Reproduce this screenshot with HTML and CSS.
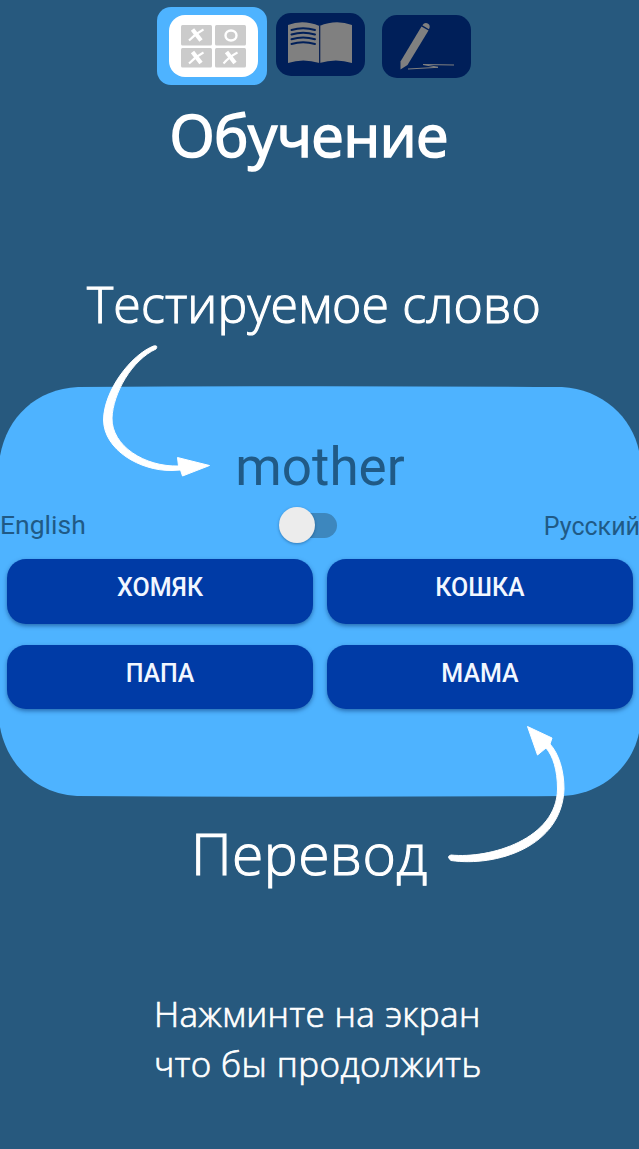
FILE: index.html
```html
<!DOCTYPE html>
<html lang="ru">
<head>
<meta charset="utf-8">
<title>Обучение</title>
<link rel="stylesheet" href="styles.css">
</head>
<body>
<main class="screen">
  <nav class="modes">
    <div class="mode-active">
      <svg class="icon" width="110" height="78" viewBox="157 7 110 78">
        <rect x="169" y="15" width="89" height="62" rx="16" fill="#fff"/>
        <g fill="#cbcbcb">
          <rect x="181" y="25" width="31" height="20.5" rx="1.5"/>
          <rect x="215" y="25" width="31" height="20.5" rx="1.5"/>
          <rect x="181" y="48" width="31" height="19.5" rx="1.5"/>
          <rect x="215" y="48" width="31" height="19.5" rx="1.5"/>
        </g>
        <g fill="none" stroke="#fff">
          <path stroke-width="4.200" d="M192.500 29.500L201 40.500M192.500 52L201 63M226.500 52L235 63"/>
          <path stroke-width="2" d="M203.500 29.500Q195 34 189 40.500M203.500 52.500Q195 57 189 63.500M237.500 52.500Q229 57 223.500 63.500"/>
          <ellipse cx="231" cy="35.500" rx="5.500" ry="5" stroke-width="2.400"/>
        </g>
      </svg>
    </div>
    <svg class="icon icon-book" width="89" height="63" viewBox="276 13 89 63">
      <rect x="276" y="13" width="89" height="63" rx="15" fill="#001f59"/>
      <path fill="#808080" d="M288 25Q303 19 319.500 26Q336 19 352 25V63Q336 58 319.500 63Q303 58 288 63Z"/>
      <path stroke="#00194d" stroke-width="1.200" d="M319.700 26V63"/>
      <path fill="none" stroke="#001f59" stroke-width="2" stroke-linecap="round" d="M291.500 30Q303 26.500 315 30M291.500 34.500Q303 31 315 34.500M291.500 39.200Q303 35.700 315 39.200M291.500 44Q303 40.500 315 44"/>
    </svg>
    <svg class="icon icon-pen" width="89" height="63" viewBox="382 15 89 63">
      <rect x="382" y="15" width="89" height="63" rx="15" fill="#001f59"/>
      <g fill="#808080">
        <path d="M421.500 26.500L428.500 30.500L407.500 65L400.500 69.500L400.500 61.500Z"/>
        <path d="M422.300 25.200Q425 21.500 428.500 24Q430.700 26 428.900 29.200Z"/>
      </g>
      <path fill="none" stroke="#808080" stroke-width="1" d="M454 65L423 64.500L438 67.300L408 69"/>
    </svg>
  </nav>

  <h1 class="title"><span>Обучение</span></h1>
  <p class="label-word"><span>Тестируемое слово</span></p>

  <section class="card">
    <svg class="card-bg" width="639" height="412" viewBox="0 386 639 412">
      <path fill="#4eb3ff" d="M0 456C7 417 36 389 78 387Q320 385.500 562 387C602 389 632 417 639 451V733C632 767 602 794 563 796Q320 797.500 77 796C38 794 7 766 0 727Z"/>
    </svg>
    <div class="card-body">
      <div class="word">mother</div>
      <div class="languages">
        <span class="lang-from">English</span>
        <span class="switch"><span class="knob"></span></span>
        <span class="lang-to">Русский</span>
      </div>
      <div class="answers">
        <button class="answer">ХОМЯК</button>
        <button class="answer">КОШКА</button>
        <button class="answer">ПАПА</button>
        <button class="answer">МАМА</button>
      </div>
    </div>
  </section>

  <p class="label-translation"><span>Перевод</span></p>
  <p class="hint"><span class="hint-top">Нажминте на экран</span><span class="hint-bottom">что бы продолжить</span></p>

  <svg class="arrows" width="639" height="1149" viewBox="0 0 639 1149">
    <path d="M153.500 346C131 355 104 390 103.500 420C104 450 140 471 172 470.500L180.500 470L182.500 476L209.500 465.500L177.500 457.500L178.500 466C145 467 111.500 446 112 418C113 393 132 360 156 349Q158.500 345 153.500 346Z"/>
    <path d="M451 855C490 859 557 839 557.500 789C557.500 770 553 756 546 748L537.500 755L527.500 726.500L552 738L550 744C559 754 564 771 564 789C562 847 496 867 451 860.500Q446 856.500 451 855Z"/>
  </svg>
</main>
</body>
</html>
```
FILE: styles.css
```css
* { box-sizing: border-box; }
body { margin: 0; background: #27597e; }
.screen {
  position: relative;
  display: flex;
  flex-direction: column;
  width: 639px;
  height: 1149px;
  overflow: hidden;
  color: #fff;
  font-family: "Open Sans", "Noto Sans", sans-serif;
}
p, h1 { margin: 0; font-weight: 300; white-space: nowrap; }
p { -webkit-text-stroke: 1.1px #fff; }
.icon { display: block; }
.modes {
  display: flex;
  align-items: flex-start;
  height: 95px;
  padding: 7px 0 0 157px;
}
.mode-active {
  width: 110px;
  height: 78px;
  border-radius: 14px;
  background: #4eb3ff;
}
.icon-book { margin: 6px 0 0 9px; }
.icon-pen { margin: 8px 0 0 17px; }
.title {
  height: 165px;
  padding-left: 169.5px;
  font-size: 58px;
  font-weight: 500;
  line-height: 79px;
  letter-spacing: -.5px;
  -webkit-text-stroke: 1.6px #fff;
}
.label-word {
  height: 126px;
  padding: 10px 0 0 87px;
  font-size: 50px;
  line-height: 69px;
  letter-spacing: .15px;
}
.card { display: grid; height: 412px; }
.card-bg, .card-body { grid-area: 1 / 1; }
.card-body {
  padding-top: 50px;
  color: #205a86;
  font-family: Roboto, sans-serif;
}
.word {
  height: 64px;
  font-size: 53px;
  line-height: 62px;
  text-align: center;
}
.languages {
  display: grid;
  grid-template-columns: 1fr 58px 1fr;
  align-items: center;
  height: 50px;
  font-size: 26.5px;
}
.lang-from { padding-bottom: 2px; }
.lang-to { padding-top: 2px; font-size: 25px; text-align: right; }
.switch {
  display: flex;
  align-items: center;
  width: 53px;
  height: 25px;
  margin-left: -7px;
  border-radius: 13px;
  background: #3d87be;
}
.knob {
  flex: none;
  width: 36px;
  height: 36px;
  margin-left: -5px;
  border-radius: 50%;
  background: #ececec;
  box-shadow: 0 1px 3px rgba(0, 40, 80, .4);
}
.answers {
  display: grid;
  grid-template-columns: 306px 306px;
  gap: 21px 14px;
  padding: 9px 7px 0;
}
.answer {
  height: 64.5px;
  padding: 0 0 6px;
  border: 0;
  border-radius: 19px;
  background: #003ba6;
  box-shadow: 0 2px 4px rgba(0, 40, 100, .5);
  color: #f2f7ff;
  font: 500 25px/30px Roboto, sans-serif;
}
.label-translation {
  height: 190px;
  padding: 15px 0 0 191px;
  font-size: 57px;
  line-height: 80px;
  letter-spacing: .4px;
}
.hint {
  display: flex;
  flex-direction: column;
  padding: 1px 0 0 154px;
  font-size: 35px;
  line-height: 50px;
  letter-spacing: .4px;
  -webkit-text-stroke-width: .7px;
}
.arrows {
  position: absolute;
  left: 0;
  top: 0;
  fill: #fff;
  stroke: #fff;
  stroke-width: 1;
  stroke-linejoin: round;
}
```
